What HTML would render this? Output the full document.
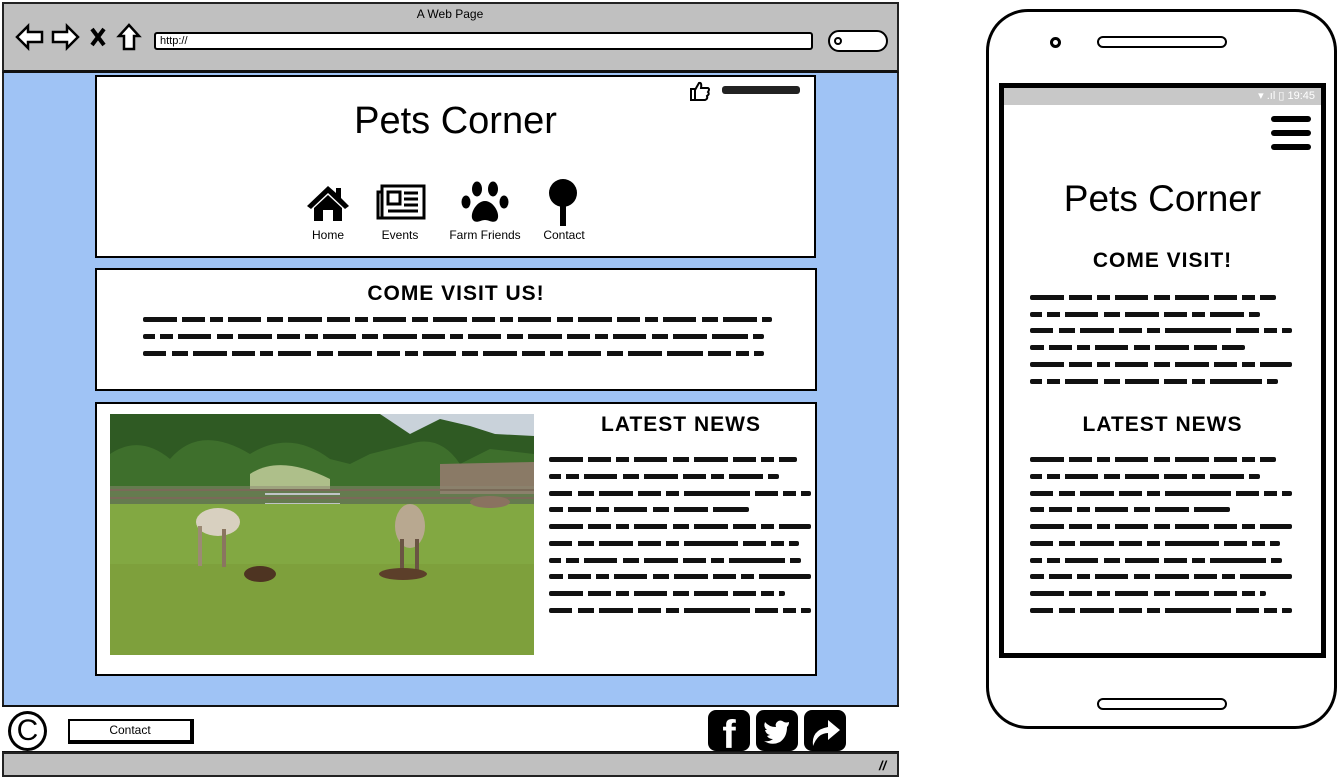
<!DOCTYPE html>
<html><head><meta charset="utf-8">
<style>
*{margin:0;padding:0;box-sizing:border-box}
body{width:1339px;height:779px;background:#fff;position:relative;overflow:hidden;font-family:"Liberation Sans","DejaVu Sans",sans-serif;color:#000}
.a{position:absolute}
.box{position:absolute;background:#fff;border:2px solid #000}
.s{position:absolute;height:5px;border-radius:2px;background:repeating-linear-gradient(90deg,#111 0 34px,transparent 34px 39px,#111 39px 62px,transparent 62px 67px,#111 67px 80px,transparent 80px 85px,#111 85px 118px,transparent 118px 124px,#111 124px 140px,transparent 140px 145px)}
.s2{background-position:-50px 0}.s3{background-position:-95px 0}.s4{background-position:-20px 0}
.h{font-weight:bold;text-align:center;letter-spacing:1px}
.nav{position:absolute;font-size:12px;text-align:center}
</style></head><body>

<!-- browser -->
<div class="a" style="left:2px;top:2px;width:897px;height:775px;border:2px solid #222;background:#9fc3f5"></div>
<div class="a" style="left:2px;top:2px;width:897px;height:71px;border:2px solid #222;border-bottom:3px solid #111;background:#c0c0c0"></div>
<div class="a" style="left:0;top:7px;width:900px;text-align:center;font-size:12px">A Web Page</div>
<svg class="a" style="left:14px;top:22px" width="130" height="30" viewBox="0 0 130 30">
<path d="M3 15 L14 4 L14 10 L28 10 L28 20 L14 20 L14 26 Z" fill="#fff" stroke="#000" stroke-width="2.5"/>
<path d="M64 15 L53 4 L53 10 L39 10 L39 20 L53 20 L53 26 Z" fill="#fff" stroke="#000" stroke-width="2.5"/>
<path d="M78 7 L90 23 M90 7 L78 23" stroke="#000" stroke-width="4"/>
<path d="M115 3 L105 14 L110 14 L110 27 L120 27 L120 14 L125 14 Z" fill="#fff" stroke="#000" stroke-width="2.5"/>
</svg>
<div class="a" style="left:154px;top:32px;width:659px;height:18px;border:2px solid #000;background:#fff;border-radius:3px;font-size:11px;padding-left:4px;line-height:14px">http://</div>
<div class="a" style="left:828px;top:30px;width:60px;height:22px;border:2px solid #000;background:#fff;border-radius:11px"></div>
<div class="a" style="left:834px;top:37px;width:8px;height:8px;border:2px solid #000;border-radius:50%"></div>

<!-- header box -->
<div class="box" style="left:95px;top:75px;width:721px;height:183px"></div>
<div class="a" style="left:95px;top:100px;width:721px;text-align:center;font-size:38px">Pets Corner</div>
<svg class="a" style="left:689px;top:80px" width="22" height="22" viewBox="0 0 22 22"><path d="M2 9 H6 V20 H2 Z M6 10 L10 3 Q13 2 12 8 H19 Q21 9 19 12 Q21 14 18 16 Q19 19 16 20 H6" fill="#fff" stroke="#000" stroke-width="2"/></svg>
<div class="a" style="left:722px;top:86px;width:78px;height:8px;background:#222;border-radius:3px"></div>
<svg class="a" style="left:306px;top:184px" width="44" height="38" viewBox="0 0 44 38"><path d="M22 2 L1 22 L5 25 L22 9 L39 25 L43 22 L35 14 V4 H30 V9 Z" fill="#000"/><path d="M8 24 L22 11 L36 24 V37 H27 V26 H17 V37 H8 Z" fill="#000"/></svg>
<svg class="a" style="left:376px;top:184px" width="50" height="36" viewBox="0 0 50 36"><rect x="6" y="2" width="42" height="32" fill="#fff" stroke="#000" stroke-width="3"/><path d="M6 8 H2 V34 H8" fill="none" stroke="#000" stroke-width="3"/><rect x="12" y="8" width="12" height="12" fill="none" stroke="#000" stroke-width="3"/><path d="M28 9 H42 M28 15 H42 M28 21 H42 M12 27 H42" stroke="#000" stroke-width="3"/></svg>
<svg class="a" style="left:460px;top:180px" width="50" height="45" viewBox="0 0 50 45"><ellipse cx="17" cy="9" rx="5" ry="7.5"/><ellipse cx="33" cy="9" rx="5" ry="7.5"/><ellipse cx="6" cy="22" rx="4.5" ry="6.5"/><ellipse cx="44" cy="22" rx="4.5" ry="6.5"/><path d="M25 21 C16 21 9 35 13 40 C16 44 21 40 25 40 C29 40 34 44 37 40 C41 35 34 21 25 21 Z"/></svg>
<svg class="a" style="left:548px;top:178px" width="30" height="50" viewBox="0 0 30 50"><circle cx="15" cy="15" r="14"/><rect x="12" y="27" width="6" height="21"/></svg>
<div class="nav" style="left:307px;top:228px;width:42px">Home</div>
<div class="nav" style="left:375px;top:228px;width:50px">Events</div>
<div class="nav" style="left:442px;top:228px;width:86px">Farm Friends</div>
<div class="nav" style="left:535px;top:228px;width:58px">Contact</div>

<!-- come visit -->
<div class="box" style="left:95px;top:268px;width:722px;height:123px"></div>
<div class="a h" style="left:95px;top:282px;width:722px;font-size:21px">COME VISIT US!</div>
<div class="s" style="left:143px;top:317px;width:629px"></div>
<div class="s s2" style="left:143px;top:334px;width:621px"></div>
<div class="s s3" style="left:143px;top:351px;width:621px"></div>

<!-- news -->
<div class="box" style="left:95px;top:402px;width:722px;height:274px"></div>
<svg class="a" style="left:110px;top:414px" width="424" height="241" viewBox="0 0 424 241" preserveAspectRatio="none">
<rect width="424" height="241" fill="#7fa23e"/>
<rect width="424" height="40" fill="#c9d2da"/>
<path d="M0 0 H270 L285 10 L300 20 L330 5 L360 12 L385 20 L424 22 V90 H0 Z" fill="#2f5a23"/>
<path d="M0 40 Q30 20 60 45 Q90 10 140 40 Q180 15 220 45 L240 50 L260 40 L300 30 Q330 20 350 50 L380 35 L424 40 V90 H0 Z" fill="#3e6f2c"/>
<path d="M140 60 Q170 40 220 65 V75 H140 Z" fill="#aebf8a"/>
<path d="M330 50 L424 48 V80 H330 Z" fill="#8a7a66"/>
<rect x="0" y="72" width="424" height="20" fill="#8c8872" opacity=".5"/>
<path d="M0 76 H424 M0 84 H424" stroke="#7a6a58" stroke-width="2"/>
<path d="M155 80 H230 M155 90 H230 M155 100 H230" stroke="#bfc3c6" stroke-width="2"/>
<rect x="0" y="90" width="424" height="151" fill="#82a842"/>
<rect x="0" y="150" width="424" height="91" fill="#7ea03c"/>
<ellipse cx="108" cy="108" rx="22" ry="14" fill="#d8d0c0"/>
<rect x="88" y="112" width="4" height="40" fill="#9c8a74"/><rect x="112" y="115" width="4" height="38" fill="#8a7560"/>
<ellipse cx="300" cy="112" rx="15" ry="22" fill="#b8a890"/>
<rect x="290" y="125" width="4" height="32" fill="#6a5443"/><rect x="305" y="125" width="4" height="32" fill="#6a5443"/>
<ellipse cx="150" cy="160" rx="16" ry="8" fill="#4e3422"/>
<ellipse cx="293" cy="160" rx="24" ry="6" fill="#5c3f2a"/>
<ellipse cx="380" cy="88" rx="20" ry="6" fill="#8a7260"/>
</svg>
<div class="a h" style="left:545px;top:413px;width:272px;font-size:21px">LATEST NEWS</div>
<div class="s" style="left:549px;top:457px;width:248px"></div>
<div class="s s2" style="left:549px;top:474px;width:230px"></div>
<div class="s s3" style="left:549px;top:491px;width:262px"></div>
<div class="s s4" style="left:549px;top:507px;width:200px"></div>
<div class="s" style="left:549px;top:524px;width:262px"></div>
<div class="s s3" style="left:549px;top:541px;width:250px"></div>
<div class="s s2" style="left:549px;top:558px;width:252px"></div>
<div class="s s4" style="left:549px;top:574px;width:262px"></div>
<div class="s" style="left:549px;top:591px;width:236px"></div>
<div class="s s3" style="left:549px;top:608px;width:262px"></div>

<!-- footer -->
<div class="a" style="left:2px;top:705px;width:897px;height:48px;background:#fff;border-top:2px solid #111;border-bottom:2px solid #111"></div>
<div class="a" style="left:2px;top:752px;width:897px;height:25px;background:#c0c0c0;border:2px solid #222"></div>
<div class="a" style="left:879px;top:758px;font-size:13px;font-weight:bold;font-style:italic">//</div>
<div class="a" style="left:8px;top:711px;width:39px;height:40px;border:3px solid #000;border-radius:50%;text-align:center;font-size:30px;line-height:34px">C</div>
<div class="a" style="left:68px;top:719px;width:126px;height:25px;border:2px solid #000;border-right-width:4px;border-bottom-width:4px;background:#fff;text-align:center;font-size:12px;line-height:19px">Contact</div>
<div class="a" style="left:708px;top:710px;width:42px;height:41px;background:#000;border-radius:8px;color:#fff;font-weight:bold;font-size:40px;line-height:50px;text-align:center;overflow:hidden">f</div>
<svg class="a" style="left:756px;top:710px" width="42" height="41" viewBox="0 0 42 41"><rect width="42" height="41" rx="8"/><path d="M33 12 Q30 13 28 12 Q24 9 21 12 Q19 14 20 17 Q13 17 9 12 Q7 17 11 20 L9 20 Q10 24 14 25 L11 26 Q13 29 17 29 Q13 32 8 31 Q16 36 24 32 Q31 27 31 17 Q33 15 33 12 Z" fill="#fff"/></svg>
<svg class="a" style="left:804px;top:710px" width="42" height="41" viewBox="0 0 42 41"><rect width="42" height="41" rx="8"/><path d="M9 36 Q7 20 24 17 V10 L36 20 L24 30 V23 Q14 23 9 36 Z" fill="#fff"/></svg>

<!-- phone -->
<div class="a" style="left:986px;top:9px;width:351px;height:720px;border:3px solid #000;border-radius:42px;background:#fff"></div>
<div class="a" style="left:1050px;top:37px;width:11px;height:11px;border:3px solid #000;border-radius:50%"></div>
<div class="a" style="left:1097px;top:36px;width:130px;height:12px;border:2px solid #000;border-radius:6px"></div>
<div class="a" style="left:1097px;top:698px;width:130px;height:12px;border:2px solid #000;border-radius:6px"></div>
<div class="a" style="left:999px;top:83px;width:327px;height:575px;border:5px solid #000;background:#fff"></div>
<div class="a" style="left:1004px;top:88px;width:317px;height:17px;background:#c8c8c8;color:#fff;font-size:11px;text-align:right;padding-right:6px;line-height:17px">▾ .ıl ▯ 19:45</div>
<div class="a" style="left:1271px;top:116px;width:40px;height:6px;background:#000;border-radius:3px"></div>
<div class="a" style="left:1271px;top:130px;width:40px;height:6px;background:#000;border-radius:3px"></div>
<div class="a" style="left:1271px;top:144px;width:40px;height:6px;background:#000;border-radius:3px"></div>
<div class="a" style="left:1004px;top:178px;width:317px;text-align:center;font-size:37px">Pets Corner</div>
<div class="a h" style="left:1004px;top:249px;width:317px;font-size:21px">COME VISIT!</div>
<div class="s" style="left:1030px;top:295px;width:246px"></div>
<div class="s s2" style="left:1030px;top:312px;width:230px"></div>
<div class="s s3" style="left:1030px;top:328px;width:262px"></div>
<div class="s s4" style="left:1030px;top:345px;width:215px"></div>
<div class="s" style="left:1030px;top:362px;width:262px"></div>
<div class="s s2" style="left:1030px;top:379px;width:248px"></div>
<div class="a h" style="left:1004px;top:413px;width:317px;font-size:21px">LATEST NEWS</div>
<div class="s" style="left:1030px;top:457px;width:246px"></div>
<div class="s s2" style="left:1030px;top:474px;width:230px"></div>
<div class="s s3" style="left:1030px;top:491px;width:262px"></div>
<div class="s s4" style="left:1030px;top:507px;width:200px"></div>
<div class="s" style="left:1030px;top:524px;width:262px"></div>
<div class="s s3" style="left:1030px;top:541px;width:250px"></div>
<div class="s s2" style="left:1030px;top:558px;width:252px"></div>
<div class="s s4" style="left:1030px;top:574px;width:262px"></div>
<div class="s" style="left:1030px;top:591px;width:236px"></div>
<div class="s s3" style="left:1030px;top:608px;width:262px"></div>
</body></html>
